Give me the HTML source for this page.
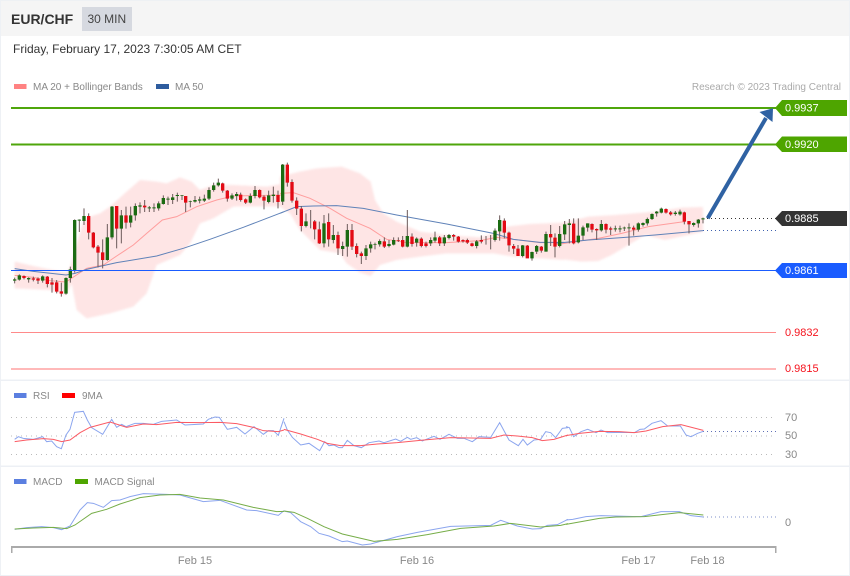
<!DOCTYPE html>
<html><head><meta charset="utf-8"><style>
html,body{margin:0;padding:0;background:#fff;width:850px;height:576px;overflow:hidden}
svg{display:block;filter:blur(.3px)}
text{font-family:"Liberation Sans",sans-serif;font-size:10px}
</style></head><body>
<svg width="850" height="576" viewBox="0 0 850 576" xmlns="http://www.w3.org/2000/svg">
<rect width="850" height="576" fill="#fff"/>
<rect x="0" y="0" width="850" height="36" fill="#f5f5f5"/>
<rect x="0" y="0" width="850" height="1" fill="#eef1f4"/>
<rect x="0" y="0" width="1" height="576" fill="#eef1f5"/>
<rect x="849" y="0" width="1" height="576" fill="#eef1f5"/>
<rect x="0" y="379.500" width="850" height="1.500" fill="#edf0f5"/>
<rect x="0" y="465.500" width="850" height="1.500" fill="#edf0f5"/>
<rect x="0" y="575" width="850" height="1" fill="#edf0f5"/>
<rect x="82" y="7" width="50" height="24" fill="#d6d9e0"/>
<text x="11" y="24" font-weight="bold" fill="#333" style="font-size:14px">EUR/CHF</text>
<text x="87.500" y="23" fill="#444" style="font-size:12px">30 MIN</text>
<text x="13" y="53" fill="#333" style="font-size:12px">Friday, February 17, 2023 7:30:05 AM CET</text>

<rect x="14" y="84" width="12.500" height="5" fill="#ff8282"/>
<text x="33" y="90" fill="#888">MA 20 + Bollinger Bands</text>
<rect x="156" y="84" width="13" height="5" fill="#2e5c9e"/>
<text x="175" y="90" fill="#888">MA 50</text>
<text x="841" y="90" fill="#aaa" text-anchor="end">Research © 2023 Trading Central</text>

<!-- bands -->
<g fill="#fee5e5" style="filter:blur(1px)">
<polygon transform="translate(0,150) scale(.33333)" points="44,335 100,348 198,368 210,352 225,300 250,215 270,200 300,190 330,170 380,125 420,90 470,95 500,100 540,82 575,95 600,120 640,105 700,105 800,110 852,100 852,170 800,170 700,170 640,205 600,220 570,280 540,315 470,345 440,430 400,470 330,490 260,505 230,480 215,400 198,435 150,420 44,415"/>
<polygon transform="translate(280,150) scale(.33333)" points="0,80 60,65 110,55 185,50 240,70 272,95 285,150 310,190 350,215 420,245 500,255 600,262 640,250 680,230 750,222 852,218 852,330 700,320 640,310 500,310 420,320 350,330 300,345 272,378 240,368 200,340 180,310 120,300 60,240 30,190 0,170"/>
<polygon transform="translate(555,195) scale(.33333)" points="0,90 100,65 180,60 300,50 380,38 444,36 444,110 400,120 330,135 270,120 220,150 170,180 130,198 80,200 0,190"/>
</g>

<!-- MA lines -->
<g fill="none" stroke-width="3">
<polyline transform="translate(0,150) scale(.33333)" stroke="#ff9d9d" points="44,376 100,382 150,392 198,396 225,378 260,355 310,345 350,318 400,285 440,250 487,210 530,200 590,170 650,150 700,138 852,135"/>
<polyline transform="translate(280,150) scale(.33333)" stroke="#ff9d9d" points="0,130 40,128 90,145 150,175 200,205 270,235 320,268 380,278 500,278 600,272 650,262 700,268 780,278 852,278"/>
<polyline transform="translate(555,195) scale(.33333)" stroke="#ff9d9d" points="0,150 60,140 130,130 200,115 280,95 388,80"/>
<polyline transform="translate(0,150) scale(.33333)" stroke="#5f82b8" points="44,356 100,364 198,375 225,370 260,358 350,338 470,318 550,295 630,268 730,232 852,185"/>
<polyline transform="translate(280,150) scale(.33333)" stroke="#5f82b8" points="0,190 50,170 100,168 170,167 250,175 350,195 500,222 640,250 700,268 780,277 852,277"/>
<polyline transform="translate(555,195) scale(.33333)" stroke="#5f82b8" points="0,145 100,135 200,128 300,120 444,107"/>
</g>

<!-- candles group 1 -->
<g transform="translate(0,150) scale(.33333)" fill="none">
<path stroke="#6b5a5a" stroke-width="3" d="M44 383V400M58 373V392M72 376V388M86 382V398M100 380V394M114 382V402M128 376V398M142 378V412M156 384V428M170 390V430M184 398V440M198 382V434M211 350V398M224 208V368M238 208V246M252 175V225M266 190V268M280 246V295M294 285V352M308 268V355M322 222V332M336 168V268M350 168V295M364 180V280M378 170V236M392 170V232M406 160V212M420 157V190M434 150V186M448 168V186M462 160V186M476 154V182M490 136V164M504 140V165M518 132V162M532 128V155M546 135V150M557 138V186M571 152V172M585 138V158M599 140V160M613 134V156M627 112V150M641 98V125M655 86V110M668 98V128M682 120V155M696 130V150M710 126V152M722 128V155M737 145V162M751 130V160M765 108V145M779 118V145M792 136V178M806 122V160M820 110V158M834 122V175"/>
<path stroke="#1b6b12" stroke-width="10" d="M44 388V392M58 376V389M86 384V388M128 379V392M198 384V431M211 358V384M224 210V360M238 209V212M252 198V213M322 262V330M336 170V262M364 196V236M392 196V218M406 168V196M420 166V170M448 172V175M462 172V175M476 160V175M490 144V162M504 146V149M518 142V150M532 135V138M546 136V138M571 154V156M585 150V155M599 148V152M613 146V152M627 120V146M641 106V120M655 98V106M696 136V146M710 132V138M751 138V158M765 120V138M806 136V156M820 134V138"/>
<path stroke="#e30a14" stroke-width="10" d="M72 378V384M100 385V389M114 386V392M142 380V402M156 397V404M170 397V425M184 424V431M266 198V248M280 248V292M294 290V308M308 307V330M350 168V236M378 196V218M434 167V172M557 138V158M668 100V122M682 122V146M722 134V150M737 148V158M779 120V142M792 140V152M834 135V156"/>
</g>
<!-- candles group 2 -->
<g transform="translate(280,150) scale(.33333)" fill="none">
<path stroke="#6b5a5a" stroke-width="3" d="M8 42V165M22 38V110M36 88V158M50 142V195M64 168V244M78 190V232M92 180V235M104 210V268M118 215V282M132 195V292M146 190V290M160 225V280M174 245V315M188 275V318M202 222V320M216 222V300M230 280V322M244 305V342M258 285V330M272 275V308M285 278V298M299 268V290M313 262V294M327 270V292M341 262V286M355 262V276M368 258V292M382 180V292M396 250V290M410 262V290M424 262V292M438 275V292M452 262V288M465 245V278M479 258V288M493 255V288M507 252V268M521 252V272M535 258V278M549 268V278M562 266V282M576 278V290M590 270V295M604 256V280M618 258V284M632 255V298M645 235V275M659 196V272M673 205V265M687 245V305M701 282V312M714 285V318M728 285V322M742 285V322M756 305V332M770 285V312M784 288V308M798 245V305M812 225V288M825 250V322M839 228V292"/>
<path stroke="#1b6b12" stroke-width="10" d="M8 44V155M78 214V228M160 255V270M132 220V280M188 288V297M202 240V290M258 295V318M272 283V295M285 282V284M299 273V283M327 282V288M341 270V284M382 258V290M410 266V278M452 270V280M465 262V272M493 262V280M507 255V264M590 274V288M645 242V270M659 210V244M728 286V318M756 306V325M770 288V305M798 252V305M839 252V288"/>
<path stroke="#e30a14" stroke-width="10" d="M22 44V98M36 96V152M50 152V176M64 176V228M104 214V238M118 238V280M146 216V268M174 255V295M216 240V290M230 288V312M244 310V318M313 274V290M355 270V272M368 270V290M396 260V282M424 266V288M438 280V288M479 262V280M521 255V260M535 260V275M549 270V274M562 270V278M576 280V288M604 270V275M673 212V248M687 248V286M701 288V296M714 296V318M742 287V325M784 290V302M812 252V262M825 263V290"/>
</g>
<!-- candles group 3 -->
<g transform="translate(555,195) scale(.33333)" fill="none">
<path stroke="#6b5a5a" stroke-width="3" d="M29 78V135M43 72V145M56 70V148M70 70V145M84 92V135M98 85V110M111 85V112M125 100V135M139 75V110M153 85V115M167 95V120M181 92V110M195 92V112M208 95V108M222 85V152M236 92V122M250 82V110M264 82V95M277 68V92M291 55V75M305 48V65M319 38V55M333 40V56M347 48V62M361 48V62M375 44V62M388 50V88M402 78V115M416 82V95M430 72V98M444 68V85"/>
<path stroke="#1b6b12" stroke-width="10" d="M29 88V118M43 85V90M70 122V142M84 97V122M98 85V98M139 87V106M181 100V103M195 100V103M208 98V100M222 97V100M250 85V104M264 84V90M277 72V85M291 57V72M305 50V55M319 41V53M361 53V57M375 50V58M416 84V90M430 74V85M444 70V73"/>
<path stroke="#e30a14" stroke-width="10" d="M56 86V145M111 87V104M125 102V106M153 87V104M167 100V104M236 98V104M333 42V53M347 52V58M388 52V80M402 78V88"/>
</g>

<!-- level lines -->
<rect x="11" y="107" width="765" height="2" fill="#4fa60b"/>
<rect x="11" y="143.500" width="765" height="2" fill="#4fa60b"/>
<rect x="11" y="270" width="765" height="1" fill="#1a5cff"/>
<rect x="11" y="332" width="765" height="1" fill="#ff8a8a"/>
<rect x="11" y="368" width="765" height="2" fill="#ffb9b9"/>
<line x1="707" y1="218.500" x2="776" y2="218.500" stroke="#333" stroke-dasharray="1 3"/>
<line x1="703" y1="230.500" x2="776" y2="230.500" stroke="#3f62b0" stroke-dasharray="1 3"/>

<!-- arrow -->
<line x1="707.700" y1="218.300" x2="766" y2="118" stroke="#2f62a3" stroke-width="4"/>
<polygon points="773,108.300 759.500,112 772.500,122" fill="#2f62a3"/>

<!-- labels -->
<polygon points="775,108 782,100 847,100 847,116 782,116" fill="#4ea500"/>
<polygon points="775,144.500 782,136.500 847,136.500 847,152 782,152" fill="#4ea500"/>
<polygon points="775,218.500 782,211 847,211 847,226 782,226" fill="#333"/>
<polygon points="775,270.500 782,263 847,263 847,278 782,278" fill="#1a5cff"/>
<text x="785" y="111.500" fill="#fff" style="font-size:11px">0.9937</text>
<text x="785" y="148" fill="#fff" style="font-size:11px">0.9920</text>
<text x="785" y="222" fill="#fff" style="font-size:11px">0.9885</text>
<text x="785" y="274" fill="#fff" style="font-size:11px">0.9861</text>
<text x="785" y="336" fill="#f5141e" style="font-size:11px">0.9832</text>
<text x="785" y="372" fill="#f5141e" style="font-size:11px">0.9815</text>

<!-- RSI panel -->
<rect x="14" y="393" width="12.500" height="5" fill="#5b7fe0"/>
<text x="33" y="399" fill="#888">RSI</text>
<rect x="62" y="393" width="13" height="5" fill="#f00"/>
<text x="82" y="399" fill="#888">9MA</text>
<g stroke="#bbb" stroke-dasharray="1 4">
<line x1="11" y1="417.500" x2="776" y2="417.500"/>
<line x1="11" y1="436" x2="776" y2="436"/>
<line x1="11" y1="454.500" x2="776" y2="454.500"/>
</g>
<line x1="703" y1="431.500" x2="776" y2="431.500" stroke="#5f6fb5" stroke-dasharray="1 3"/>
<text x="785" y="421" fill="#888" style="font-size:11px">70</text>
<text x="785" y="439" fill="#888" style="font-size:11px">50</text>
<text x="785" y="458" fill="#888" style="font-size:11px">30</text>
<g fill="none" stroke-width="3">
<polyline transform="translate(0,380) scale(.33333)" stroke="#8ba5ee" points="44,178 55,170 70,175 100,178 128,170 140,185 155,183 170,200 184,206 198,165 210,148 224,97 250,94 262,120 275,143 308,163 335,118 350,142 365,133 378,140 405,130 430,130 460,133 485,124 530,120 555,135 610,132 625,118 645,111 658,112 682,148 710,142 735,162 762,140 790,163 805,152 820,152 835,166 852,115"/>
<polyline transform="translate(284,380) scale(.33333)" stroke="#8ba5ee" points="0,125 10,150 25,172 50,195 75,190 107,212 122,185 135,197 150,195 165,203 175,203 190,181 210,197 232,203 255,188 285,183 300,188 335,177 350,184 370,172 380,178 398,173 415,183 450,169 468,178 495,163 520,175 540,175 565,185 585,170 620,172 647,128 675,180 703,197 717,178 730,195 750,180 770,178 785,155 800,158 815,173 835,145 852,143"/>
<polyline transform="translate(566,300) scale(.33333)" stroke="#8ba5ee" points="0,380 10,383 23,410 45,395 65,388 90,398 105,390 125,398 170,397 205,398 222,388 235,387 258,370 285,362 305,378 343,378 360,405 375,410 395,400 412,394"/>
<polyline transform="translate(0,380) scale(.33333)" stroke="#fb5a63" points="44,185 80,180 130,176 160,178 185,185 210,180 240,158 270,142 330,126 380,142 430,132 470,134 530,127 600,128 660,127 710,131 760,142 790,152 835,155 852,150"/>
<polyline transform="translate(284,380) scale(.33333)" stroke="#fb5a63" points="0,148 50,162 100,178 130,190 170,197 230,197 280,192 340,188 420,180 500,173 620,175 660,165 700,168 745,173 775,182 810,178 852,165"/>
<polyline transform="translate(566,300) scale(.33333)" stroke="#fb5a63" points="0,407 40,400 100,394 160,395 205,398 240,393 290,380 345,374 412,391"/>
</g>

<!-- MACD panel -->
<rect x="14" y="479" width="12.500" height="5" fill="#5b7fe0"/>
<text x="33" y="485" fill="#888">MACD</text>
<rect x="75" y="479" width="13" height="5" fill="#4ea500"/>
<text x="94.500" y="485" fill="#888">MACD Signal</text>
<line x1="703" y1="517" x2="776" y2="517" stroke="#7d8fc9" stroke-dasharray="1 3"/>
<text x="785" y="526" fill="#888" style="font-size:11px">0</text>
<g fill="none" stroke-width="3">
<polyline transform="translate(0,380) scale(.33333)" stroke="#8ba5ee" points="44,448 80,443 125,440 160,443 185,449 210,438 240,390 262,368 280,370 310,382 335,362 360,360 390,350 430,341 500,343 540,345 610,365 660,361 740,390 770,392 835,406 852,392"/>
<polyline transform="translate(284,380) scale(.33333)" stroke="#8ba5ee" points="0,393 20,398 50,425 80,440 105,460 135,468 175,485 190,483 235,495 260,492 340,470 400,457 500,439 620,436 650,421 700,438 745,447 770,446 790,436 820,434 852,418"/>
<polyline transform="translate(566,300) scale(.33333)" stroke="#8ba5ee" points="0,660 20,658 60,650 105,647 225,650 285,635 340,635 375,647 412,651"/>
<polyline transform="translate(0,380) scale(.33333)" stroke="#76ad48" points="44,447 100,444 160,442 200,446 225,435 275,400 320,388 360,372 420,353 480,345 540,343 600,354 670,360 760,382 830,395 852,394"/>
<polyline transform="translate(284,380) scale(.33333)" stroke="#76ad48" points="0,393 30,397 70,415 120,440 175,462 270,484 340,478 430,464 530,445 630,438 680,430 770,441 830,436 852,431"/>
<polyline transform="translate(566,300) scale(.33333)" stroke="#76ad48" points="0,673 100,655 150,651 235,650 340,638 412,645"/>
</g>

<!-- axis -->
<rect x="11" y="546" width="765" height="2" fill="#aaa"/>
<rect x="11" y="546" width="1.500" height="7" fill="#aaa"/>
<rect x="775" y="546" width="1.500" height="7" fill="#aaa"/>
<text x="195" y="564" fill="#888" text-anchor="middle" style="font-size:11px">Feb 15</text>
<text x="417" y="564" fill="#888" text-anchor="middle" style="font-size:11px">Feb 16</text>
<text x="638.500" y="564" fill="#888" text-anchor="middle" style="font-size:11px">Feb 17</text>
<text x="707.500" y="564" fill="#888" text-anchor="middle" style="font-size:11px">Feb 18</text>
</svg>
</body></html>
